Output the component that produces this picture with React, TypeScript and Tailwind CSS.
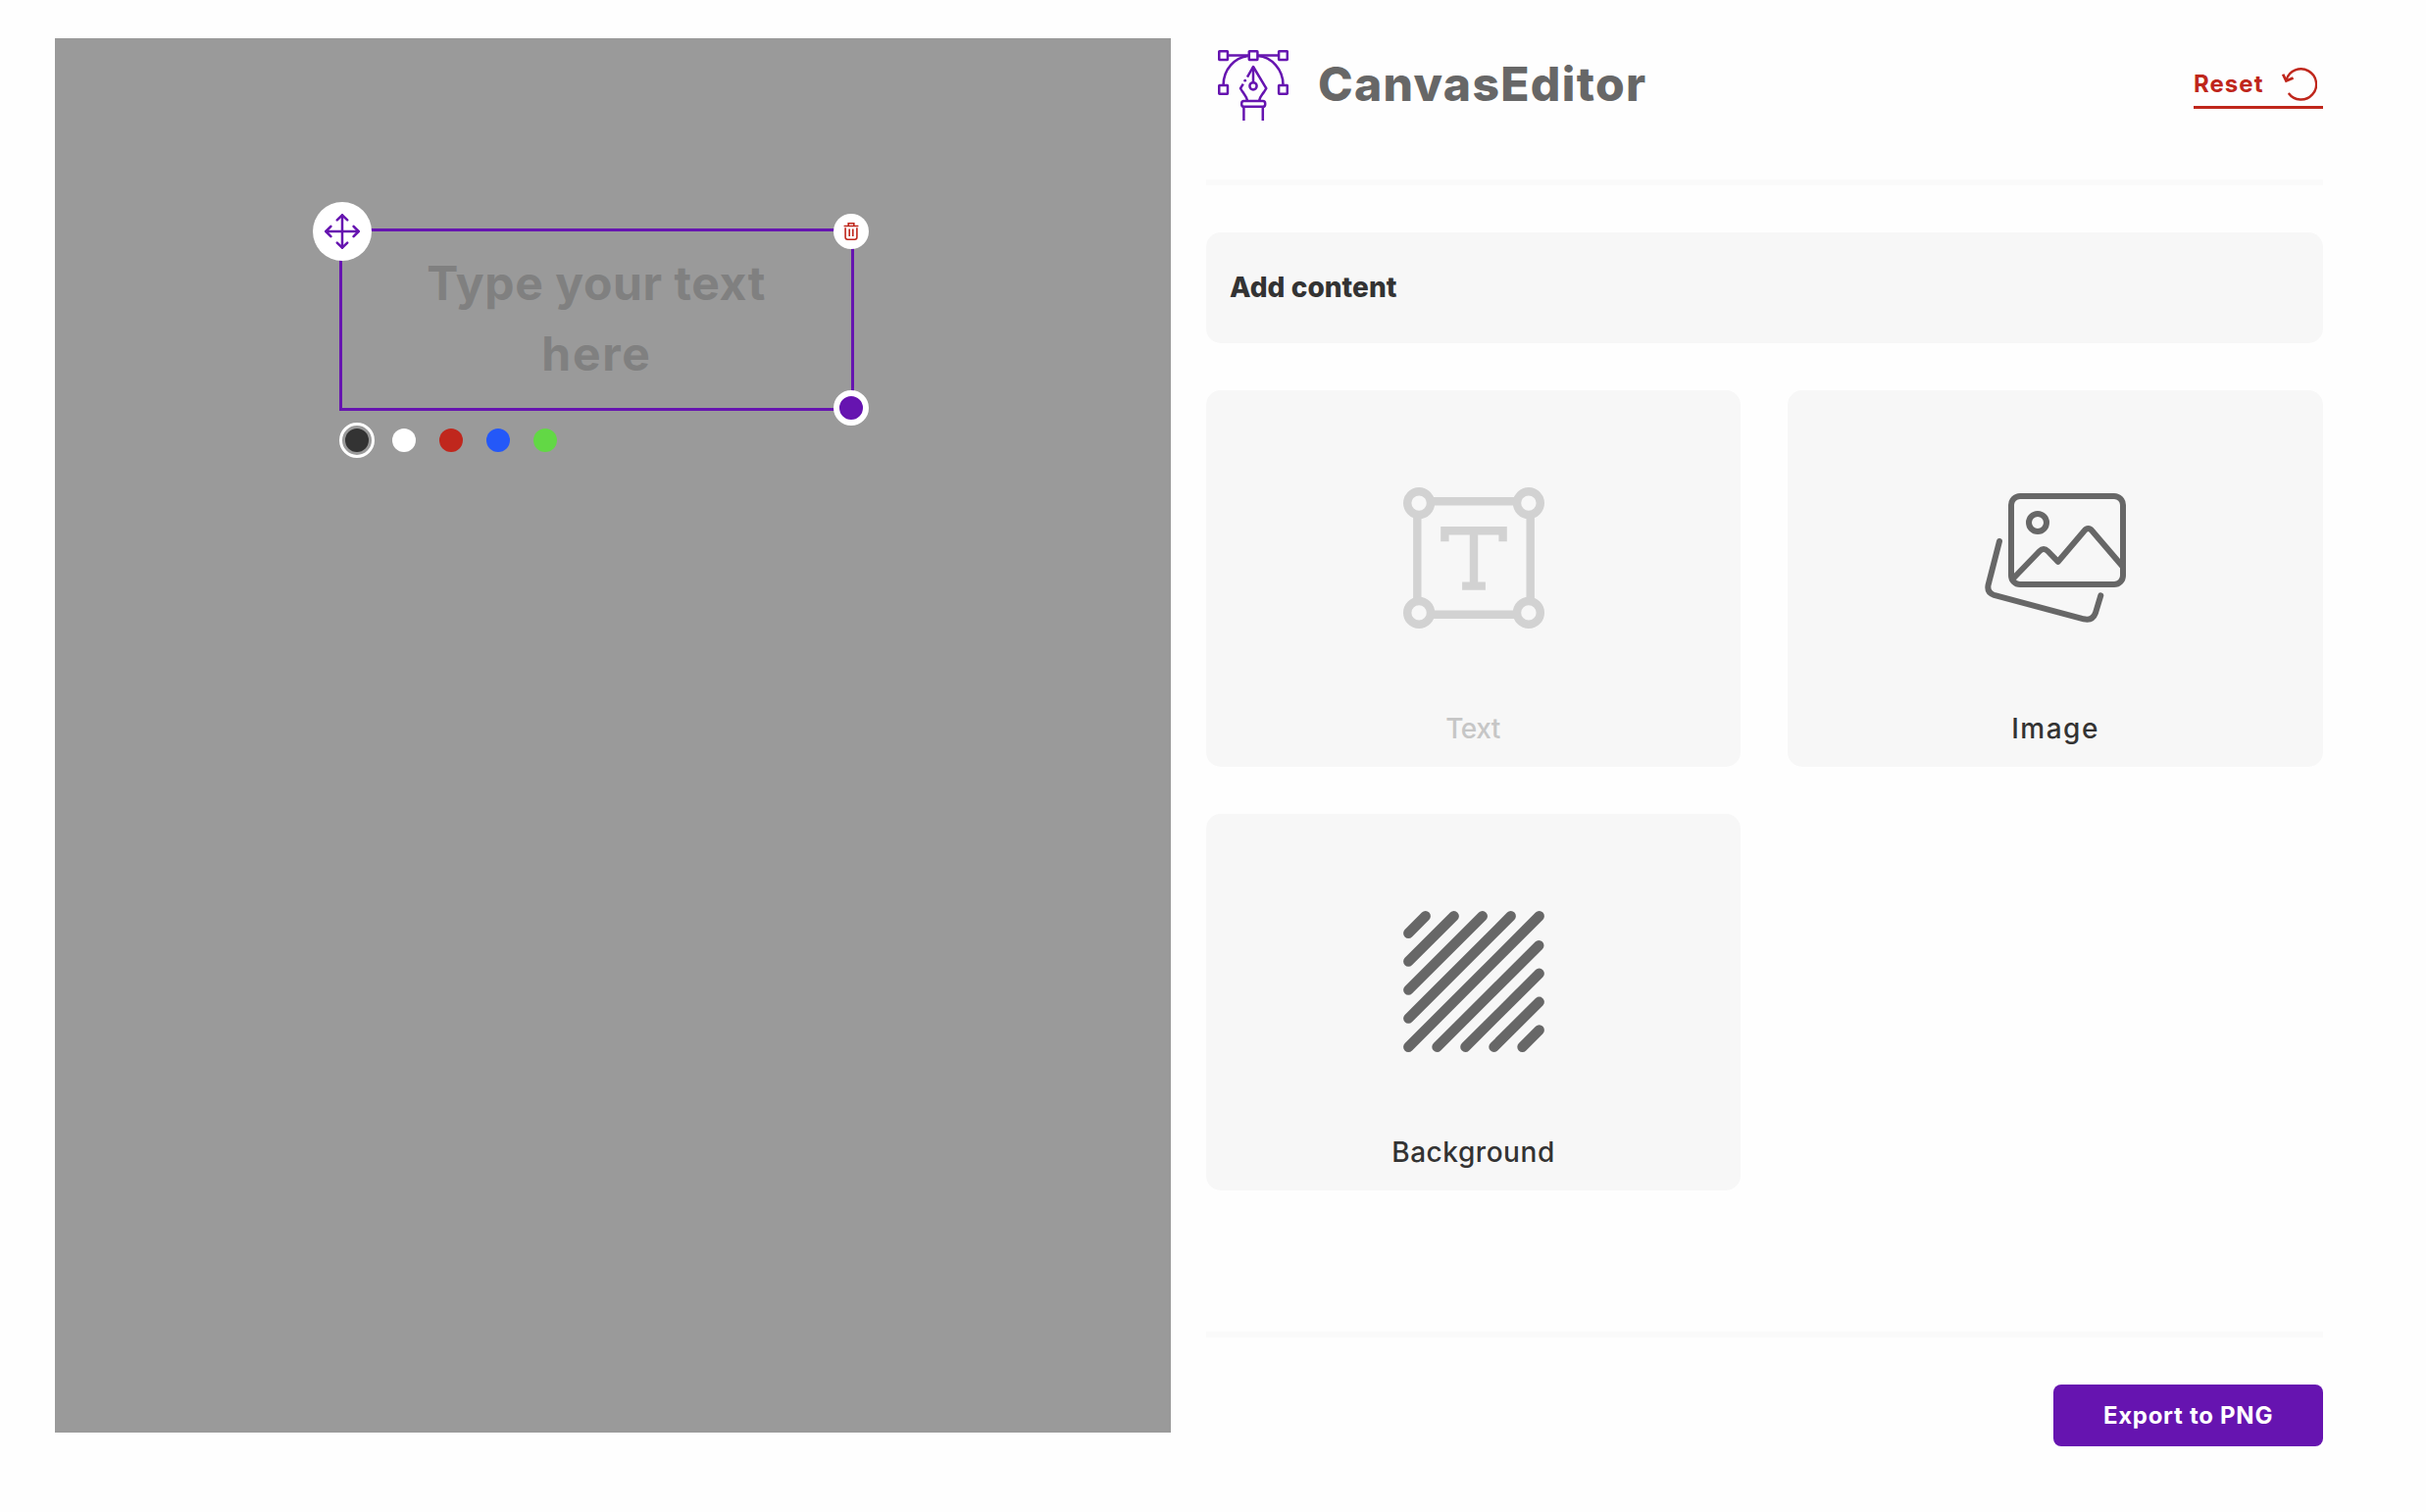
import type { ReactNode } from 'react';

function LogoIcon() {
  return (
    <svg className="h-[72px] w-[72px] text-[#6614b0]" viewBox="0 0 72 72" fill="none" stroke="currentColor" strokeWidth="2.5">
      <rect x="1.25" y="1.25" width="8.7" height="8.7" rx="0.4" />
      <rect x="31.8" y="1.25" width="8.6" height="8.7" rx="0.4" />
      <rect x="62.1" y="1.25" width="8.7" height="8.7" rx="0.4" />
      <rect x="1.25" y="36" width="8.7" height="8.7" rx="0.4" />
      <rect x="62.1" y="36" width="8.7" height="8.7" rx="0.4" />
      <path d="M10.5 5.6H31M41 5.6H62" />
      <path d="M5.6 35.5C5.6 20 17 7 31.5 6M66.5 35.5C66.5 20 55 7 40.5 6" />
      <path d="M30 27.6L36 17L49.3 39.2L47 42.8C44.5 46.5 42.6 48 42.2 51.5M25.8 34.6L23 39.2L25.3 42.8C27.8 46.5 29.6 48 30 51.5" strokeLinejoin="round" />
      <circle cx="27.7" cy="31.2" r="1.4" fill="currentColor" stroke="none" />
      <path d="M36 17V33" />
      <circle cx="36" cy="36.8" r="3.6" />
      <rect x="24.2" y="52" width="24" height="5.8" rx="2.4" />
      <path d="M26.4 58V72M45.8 58V72" />
    </svg>
  );
}

function ResetIcon() {
  return (
    <svg className="mt-px h-9 w-9" viewBox="0 0 36 36" fill="none" stroke="currentColor" strokeWidth="2.4">
      <path d="M6.8 27A15.6 15.6 0 1 0 4.6 13.4" />
      <path d="M1.2 7.8L4.4 14.6L11.6 11.4" strokeWidth="2.7" />
    </svg>
  );
}

function MoveIcon() {
  return (
    <svg className="h-9 w-9 text-[#6614b0]" viewBox="0 0 36 36" fill="none" stroke="currentColor" strokeWidth="2.5" strokeLinecap="round" strokeLinejoin="round">
      <path d="M18 1.5V34.5M1.5 18H34.5" />
      <path d="M12.8 6.4L18 1.3L23.2 6.4M12.8 29.6L18 34.7L23.2 29.6M6.4 12.8L1.3 18L6.4 23.2M29.6 12.8L34.7 18L29.6 23.2" />
    </svg>
  );
}

function TrashIcon() {
  return (
    <svg className="h-[18px] w-[18px] text-[#bf261b]" viewBox="0 0 18 18" fill="none" stroke="currentColor" strokeWidth="1.6">
      <path d="M1.6 3.5H16.4M6.2 3.5V0.8H11.8V3.5" />
      <path d="M3.1 5.2V14.8Q3.1 17.2 5.5 17.2H12.5Q14.9 17.2 14.9 14.8V5.2" />
      <path d="M7.2 6.6V14M10.8 6.6V14" />
    </svg>
  );
}

function TextIcon() {
  return (
    <svg className="h-36 w-36" viewBox="0 0 144 144" fill="none" stroke="#d2d2d2" strokeWidth="8.4">
      <path d="M31 14.3H113M31 129.8H113M14.3 31V113M129.7 31V113" />
      <circle cx="16.1" cy="16.1" r="11.9" />
      <circle cx="127.9" cy="16.1" r="11.9" />
      <circle cx="16.1" cy="127.9" r="11.9" />
      <circle cx="127.9" cy="127.9" r="11.9" />
      <path d="M42.4 55.3V44.2H101.6V55.3M72 44.2V100.6M60.1 100.6H83.9" />
    </svg>
  );
}

function ImageIcon() {
  return (
    <svg className="h-36 w-36" viewBox="0 0 144 144" fill="none" stroke="#676767" strokeWidth="6" strokeLinecap="round" strokeLinejoin="round">
      <rect x="27" y="9" width="114" height="90" rx="9" />
      <circle cx="54" cy="36" r="9" />
      <path d="M29.5 92.5L56 65Q60 60.8 64.2 65L74.8 75.8L101 45Q105.5 39 110 45L140 80" />
      <path d="M15 55L3.6 99.5Q2 107.4 9.5 109.8L101 134.3Q110 136.3 113 128L118.3 110.3" />
    </svg>
  );
}

function BackgroundIcon() {
  return (
    <svg className="h-36 w-36" viewBox="0 0 144 144" fill="none" stroke="#676767" strokeWidth="10.4" strokeLinecap="round">
      <path d="M5.3 22.7L22.7 5.3M5.3 51.5L51.7 5.3M5.3 80.6L80.8 5.3M5.3 109.6L109.7 5.3M5.3 138.7L138.7 5.3M34.5 138.7L138.3 35.2M63.4 138.7L138.7 63.8M92.5 138.7L138.7 92.8M121.5 138.7L138.7 121.5" />
    </svg>
  );
}

function Card({ icon, label, labelClass }: { icon: ReactNode; label: string; labelClass: string }) {
  return (
    <button className="flex h-96 flex-col items-center rounded-[15px] bg-[#f7f7f7] pt-[99px]">
      {icon}
      <span className={`mt-[81px] text-[28px] leading-[42px] font-medium ${labelClass}`}>{label}</span>
    </button>
  );
}

const swatches = ['bg-white', 'bg-[#c0271d]', 'bg-[#2458f8]', 'bg-[#62d845]'];

export default function App() {
  return (
    <div className="flex h-[1542px] w-[2474px] gap-9 bg-[#fefefe] pt-[39px] pr-[105px] pl-14 font-['Inter',sans-serif] text-[#333333]">
      <main className="relative h-[1422px] w-[1138px] shrink-0 bg-[#9a9a9a]">
        <div className="absolute top-[194px] left-[290px] h-[186px] w-[525px] border-[3px] border-[#6614b0]">
          <div className="pt-[17px] text-center text-5xl leading-[72px] font-bold text-[#808080]">
            <div className="pr-px tracking-[0.6px]">Type your text</div>
            <div className="tracking-[1.72px]">here</div>
          </div>
          <button className="absolute -top-[30px] -left-[30px] flex h-[60px] w-[60px] items-center justify-center rounded-full bg-white">
            <MoveIcon />
          </button>
          <button className="absolute -top-[18px] -right-[18px] flex h-9 w-9 items-center justify-center rounded-full bg-white">
            <TrashIcon />
          </button>
          <div className="absolute -right-[18px] -bottom-[18px] h-9 w-9 rounded-full border-6 border-white bg-[#6614b0]" />
          <div className="absolute top-[195px] -left-[3px] flex items-center gap-6">
            <div className="-mr-1.5 flex h-9 w-9 items-center justify-center rounded-full border-[3px] border-white">
              <div className="h-6 w-6 rounded-full bg-[#333333]" />
            </div>
            {swatches.map((color) => (
              <div key={color} className={`h-6 w-6 rounded-full ${color}`} />
            ))}
          </div>
        </div>
      </main>

      <aside className="flex h-[1436px] flex-1 flex-col">
        <header className="flex h-24 items-center pl-3">
          <LogoIcon />
          <h1 className="mb-0.5 ml-[30px] text-5xl font-extrabold tracking-[1.33px] text-[#676767]">CanvasEditor</h1>
          <button className="ml-auto flex h-12 w-[132px] items-center justify-between border-b-[3px] border-[#bf261b] pr-1.5 text-2xl font-bold tracking-[1.05px] text-[#bf261b]">
            Reset
            <ResetIcon />
          </button>
        </header>
        <div className="mt-12 h-1.5 shrink-0 bg-[#fafafa]" />
        <div className="mt-12 flex h-[113px] shrink-0 items-center rounded-[15px] bg-[#f7f7f7] pb-0.5 pl-6">
          <h2 className="text-[28px] font-extrabold tracking-[0.05px]">Add content</h2>
        </div>
        <div className="mt-12 grid grid-cols-[545px_546px] gap-12">
          <Card icon={<TextIcon />} label="Text" labelClass="pr-px tracking-[-0.5px] text-[#c6c6c6]" />
          <Card icon={<ImageIcon />} label="Image" labelClass="tracking-[1.5px]" />
          <Card icon={<BackgroundIcon />} label="Background" labelClass="tracking-[0.55px]" />
        </div>
        <footer className="mt-auto">
          <div className="h-1.5 bg-[#fafafa]" />
          <div className="mt-12 flex justify-end">
            <button className="flex h-[63px] w-[275px] items-center justify-center rounded-lg bg-[#6614b0] text-2xl font-bold tracking-[0.72px] text-white">
              Export to PNG
            </button>
          </div>
        </footer>
      </aside>
    </div>
  );
}
